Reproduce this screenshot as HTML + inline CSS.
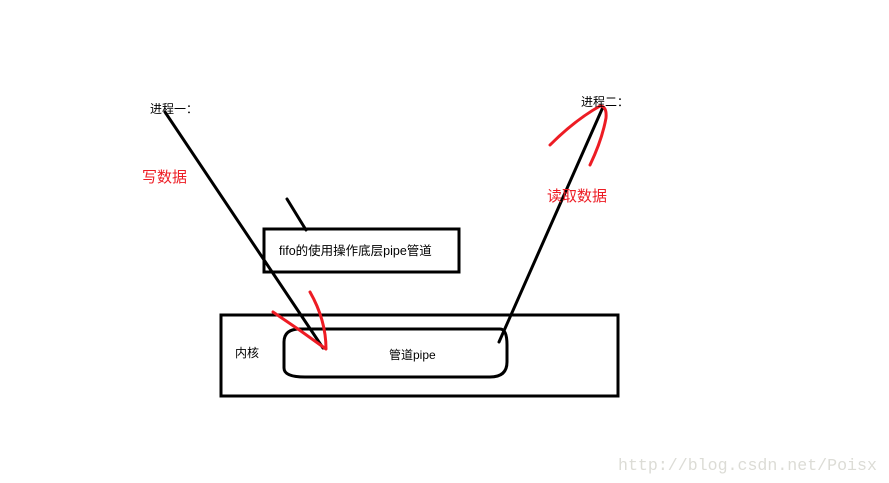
<!DOCTYPE html>
<html><head><meta charset="utf-8"><style>
html,body{margin:0;padding:0;background:#fff;width:889px;height:483px;overflow:hidden}
svg{display:block}
text{font-family:"Liberation Sans","Noto Sans CJK SC",sans-serif}
</style></head><body>
<svg width="889" height="483" viewBox="0 0 889 483">
<g fill="none" stroke="#000" stroke-width="3" stroke-linecap="round">
<rect x="221" y="315" width="397" height="81"/>
<rect x="264" y="229" width="195" height="43"/>
<path d="M300 329 L500 329 Q507 329 507 345 L507 362 Q507 377 490 377 L305 377 Q284 377 284 368 L284 342 Q284 329 300 329 Z"/>
<line x1="165" y1="112" x2="323" y2="348"/>
<line x1="603" y1="107" x2="499" y2="342"/>
<line x1="287" y1="199" x2="306" y2="230"/>
</g>
<g fill="none" stroke="#ed1c24" stroke-width="3" stroke-linecap="round" stroke-linejoin="round">
<path d="M273 312 Q300 330 326 349 Q326 320 310 292"/>
<path d="M550 145 Q575 120 600 106 Q607 106 606 118 Q602 140 590 165"/>
</g>
<g font-size="12" fill="#000">
<text x="150" y="113">进程一：</text>
<text x="581" y="106">进程二：</text>
<text x="279" y="255" font-size="12.5">fifo的使用操作底层pipe管道</text>
<text x="235" y="357">内核</text>
<text x="389" y="359">管道pipe</text>
</g>
<g font-size="15" fill="#ed1c24">
<text x="142" y="182">写数据</text>
<text x="547" y="201">读取数据</text>
</g>
<text x="618" y="470" font-size="16.6" fill="#dcdcd6" style="font-family:'Liberation Mono',monospace">http://blog.csdn.net/Poisx</text>
</svg>
</body></html>
